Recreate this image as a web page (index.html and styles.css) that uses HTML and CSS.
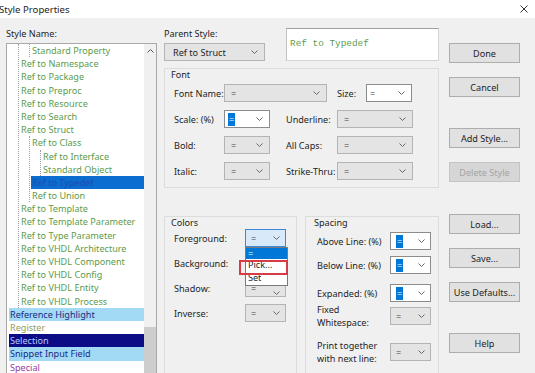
FILE: index.html
```html
<!DOCTYPE html>
<html lang="en">
<head>
  <meta charset="UTF-8">
  <title>Style Properties</title>
  <link rel="stylesheet" href="styles.css">
</head>
<body>
  <div class="titlebar">
    <span class="title">Style Properties</span>
    <svg class="close" width="8" height="8" viewBox="0 0 8 8"><path d="M0.5 0.5 L7.5 7.5 M7.5 0.5 L0.5 7.5" stroke="#333" stroke-width="1"/></svg>
  </div>

  <div class="dialog">
    <!-- left: style list -->
    <div class="col-left">
      <div class="label">Style Name:</div>
      <div class="listbox">
        <div class="tree">
          <ul class="branch">
            <li>
              <ul class="branch">
                <li><div class="item ref">Standard Property</div></li>
              </ul>
            </li>
            <li><div class="item ref">Ref to Namespace</div></li>
            <li><div class="item ref">Ref to Package</div></li>
            <li><div class="item ref">Ref to Preproc</div></li>
            <li><div class="item ref">Ref to Resource</div></li>
            <li><div class="item ref">Ref to Search</div></li>
            <li>
              <div class="item ref">Ref to Struct</div>
              <ul class="branch">
                <li>
                  <div class="item ref">Ref to Class</div>
                  <ul class="branch">
                    <li><div class="item ref">Ref to Interface</div></li>
                    <li><div class="item ref">Standard Object</div></li>
                  </ul>
                </li>
                <li><div class="item selected">Ref to Typedef</div></li>
                <li><div class="item ref">Ref to Union</div></li>
              </ul>
            </li>
            <li><div class="item ref">Ref to Template</div></li>
            <li><div class="item ref">Ref to Template Parameter</div></li>
            <li><div class="item ref">Ref to Type Parameter</div></li>
            <li><div class="item ref">Ref to VHDL Architecture</div></li>
            <li><div class="item ref">Ref to VHDL Component</div></li>
            <li><div class="item ref">Ref to VHDL Config</div></li>
            <li><div class="item ref">Ref to VHDL Entity</div></li>
            <li><div class="item ref">Ref to VHDL Process</div></li>
          </ul>
          <div class="item hl-ref">Reference Highlight</div>
          <div class="item register">Register</div>
          <div class="item selection">Selection</div>
          <div class="item snippet">Snippet Input Field</div>
          <div class="item special">Special</div>
        </div>
        <div class="vscroll">
          <div class="arrow"><svg width="7" height="4" viewBox="0 0 7 4"><path d="M0.5 3.5 L3.5 0.5 L6.5 3.5" fill="none" stroke="#555"/></svg></div>
          <div class="track"></div>
          <div class="thumb"></div>
          <div class="arrow"></div>
        </div>
      </div>
    </div>

    <!-- middle: properties -->
    <div class="col-mid">
      <div class="top-row">
        <div class="parent">
          <div class="label">Parent Style:</div>
          <div class="dd w-parent"><span>Ref to Struct</span><svg class="chev" width="7" height="4" viewBox="0 0 7 4"><path d="M0.5 0.5 L3.5 3.5 L6.5 0.5" fill="none" stroke="#666"/></svg></div>
        </div>
        <div class="preview">Ref to Typedef</div>
      </div>

      <div class="group font-group">
        <div class="group-title">Font</div>
        <div class="frow">
          <span class="flabel">Font Name:</span>
          <div class="dd w-fontname"><span>=</span><svg class="chev" width="7" height="4" viewBox="0 0 7 4"><path d="M0.5 0.5 L3.5 3.5 L6.5 0.5" fill="none" stroke="#666"/></svg></div>
          <span class="flabel size-label">Size:</span>
          <div class="dd combo w-size"><span>=</span><svg class="chev" width="7" height="4" viewBox="0 0 7 4"><path d="M0.5 0.5 L3.5 3.5 L6.5 0.5" fill="none" stroke="#666"/></svg></div>
        </div>
        <div class="frow">
          <span class="flabel">Scale: (%)</span>
          <div class="dd combo w-small"><span class="sel">=</span><svg class="chev" width="7" height="4" viewBox="0 0 7 4"><path d="M0.5 0.5 L3.5 3.5 L6.5 0.5" fill="none" stroke="#666"/></svg></div>
          <span class="flabel second">Underline:</span>
          <div class="dd w-wide"><span>=</span><svg class="chev" width="7" height="4" viewBox="0 0 7 4"><path d="M0.5 0.5 L3.5 3.5 L6.5 0.5" fill="none" stroke="#666"/></svg></div>
        </div>
        <div class="frow">
          <span class="flabel">Bold:</span>
          <div class="dd w-small"><span>=</span><svg class="chev" width="7" height="4" viewBox="0 0 7 4"><path d="M0.5 0.5 L3.5 3.5 L6.5 0.5" fill="none" stroke="#666"/></svg></div>
          <span class="flabel second">All Caps:</span>
          <div class="dd w-wide"><span>=</span><svg class="chev" width="7" height="4" viewBox="0 0 7 4"><path d="M0.5 0.5 L3.5 3.5 L6.5 0.5" fill="none" stroke="#666"/></svg></div>
        </div>
        <div class="frow">
          <span class="flabel">Italic:</span>
          <div class="dd w-small"><span>=</span><svg class="chev" width="7" height="4" viewBox="0 0 7 4"><path d="M0.5 0.5 L3.5 3.5 L6.5 0.5" fill="none" stroke="#666"/></svg></div>
          <span class="flabel second">Strike-Thru:</span>
          <div class="dd w-wide"><span>=</span><svg class="chev" width="7" height="4" viewBox="0 0 7 4"><path d="M0.5 0.5 L3.5 3.5 L6.5 0.5" fill="none" stroke="#666"/></svg></div>
        </div>
      </div>

      <div class="bottom-groups">
        <div class="group colors-group">
          <div class="group-title">Colors</div>
          <div class="crow">
            <span class="clabel">Foreground:</span>
            <div class="dd focus w-color">
              <span>=</span><svg class="chev" width="7" height="4" viewBox="0 0 7 4"><path d="M0.5 0.5 L3.5 3.5 L6.5 0.5" fill="none" stroke="#666"/></svg>
              <div class="popup">
                <div class="opt active">=</div>
                <div class="opt">Pick...</div>
                <div class="opt">Set</div>
                <div class="mark"></div>
              </div>
            </div>
          </div>
          <div class="crow">
            <span class="clabel">Background:</span>
            <div class="dd w-color"></div>
          </div>
          <div class="crow">
            <span class="clabel">Shadow:</span>
            <div class="dd w-color shadow-dd"><span>=</span><svg class="chev" width="7" height="4" viewBox="0 0 7 4"><path d="M0.5 0.5 L3.5 3.5 L6.5 0.5" fill="none" stroke="#666"/></svg></div>
          </div>
          <div class="crow">
            <span class="clabel">Inverse:</span>
            <div class="dd w-color"><span>=</span><svg class="chev" width="7" height="4" viewBox="0 0 7 4"><path d="M0.5 0.5 L3.5 3.5 L6.5 0.5" fill="none" stroke="#666"/></svg></div>
          </div>
        </div>

        <div class="group spacing-group">
          <div class="group-title">Spacing</div>
          <div class="srow">
            <span class="slabel">Above Line: (%)</span>
            <div class="dd combo w-color"><span class="sel">=</span><svg class="chev" width="7" height="4" viewBox="0 0 7 4"><path d="M0.5 0.5 L3.5 3.5 L6.5 0.5" fill="none" stroke="#666"/></svg></div>
          </div>
          <div class="srow below">
            <span class="slabel">Below Line: (%)</span>
            <div class="dd combo w-color"><span class="sel">=</span><svg class="chev" width="7" height="4" viewBox="0 0 7 4"><path d="M0.5 0.5 L3.5 3.5 L6.5 0.5" fill="none" stroke="#666"/></svg></div>
          </div>
          <div class="srow expanded">
            <span class="slabel">Expanded: (%)</span>
            <div class="dd combo w-color"><span class="sel">=</span><svg class="chev" width="7" height="4" viewBox="0 0 7 4"><path d="M0.5 0.5 L3.5 3.5 L6.5 0.5" fill="none" stroke="#666"/></svg></div>
          </div>
          <div class="srow fixed">
            <span class="slabel">Fixed<br>Whitespace:</span>
            <div class="dd w-color"><span>=</span><svg class="chev" width="7" height="4" viewBox="0 0 7 4"><path d="M0.5 0.5 L3.5 3.5 L6.5 0.5" fill="none" stroke="#666"/></svg></div>
          </div>
          <div class="srow print">
            <span class="slabel">Print together<br>with next line:</span>
            <div class="dd w-color"><span>=</span><svg class="chev" width="7" height="4" viewBox="0 0 7 4"><path d="M0.5 0.5 L3.5 3.5 L6.5 0.5" fill="none" stroke="#666"/></svg></div>
          </div>
        </div>
      </div>
    </div>

    <!-- right: buttons -->
    <div class="col-right">
      <div class="btn-group">
        <button>Done</button>
        <button>Cancel</button>
      </div>
      <div class="btn-group">
        <button>Add Style...</button>
        <button disabled>Delete Style</button>
      </div>
      <div class="btn-group third">
        <button>Load...</button>
        <button>Save...</button>
        <button>Use Defaults...</button>
      </div>
      <div class="btn-group">
        <button>Help</button>
      </div>
    </div>
  </div>
</body>
</html>
```

FILE: styles.css
```css
body {
  margin: 0;
  background: #f0f0f0;
  font-family: "Noto Sans", "Open Sans", sans-serif;
  font-size: 9.1px;
  color: #1e1e1e;
  overflow: hidden;
  height: 373px;
}
.titlebar {
  height: 18px;
  background: #fff;
  display: flex;
  align-items: center;
  justify-content: space-between;
  padding: 0 7px 0 0;
}
.title {
  margin-left: -1px;
  font-size: 9.6px;
}
.close {
  margin-top: -1px;
}
.dialog {
  display: flex;
  padding-top: 9px;
}
.label {
  line-height: 13px;
  height: 13px;
}

/* style list */
.col-left {
  width: 151px;
  margin-left: 6px;
}
.col-left .label {
  margin-bottom: 3px;
}
.listbox {
  height: 345px;
  border: 1px solid #a8a8a8;
  background: #fff;
  display: flex;
}
.tree {
  flex: 1;
  padding-left: 1px;
  overflow: hidden;
}
.branch {
  list-style: none;
  margin: 0 0 0 10px;
  padding: 0;
  border-left: 1px dotted #a0a0a0;
}
.item {
  height: 13.2px;
  line-height: 13.2px;
  margin-left: 1px;
  padding-left: 1px;
  white-space: nowrap;
}
.ref { color: #5c9c4c; }
.selected { background: #0b6dcf; color: #1d4cae; }
.hl-ref { background: #a2daf5; color: #1a2a86; }
.register { color: #9a9a62; }
.selection { background: #0c0c86; color: #b8c8ff; }
.snippet { background: #a2daf5; color: #1a2a86; }
.special { color: #9440a4; }
.vscroll {
  width: 12px;
  background: #f0f0f0;
  display: flex;
  flex-direction: column;
}
.vscroll .arrow {
  height: 14px;
  display: flex;
  align-items: center;
  justify-content: center;
}
.vscroll .track { flex: 1; }
.vscroll .thumb {
  height: 48px;
  background: #cdcdcd;
}

/* middle column */
.col-mid {
  width: 275px;
  margin-left: 7px;
}
.top-row {
  display: flex;
  align-items: flex-end;
  justify-content: space-between;
}
.parent .label {
  margin-bottom: 3px;
}
.preview {
  width: 153px;
  height: 33px;
  margin-top: -1px;
  background: #fff;
  border: 1px solid #d4d4d4;
  border-top-color: #a0a0a0;
  border-left-color: #c4c4c4;
  box-sizing: border-box;
  font-family: "Liberation Mono", monospace;
  font-size: 9.4px;
  color: #5c9c4c;
  padding: 9px 0 0 3px;
}
.dd {
  position: relative;
  flex: none;
  height: 18px;
  box-sizing: border-box;
  background: #e4e4e4;
  border: 1px solid #b4b4b4;
  display: flex;
  align-items: center;
  justify-content: space-between;
  padding: 0 6px 0 6px;
  color: #444;
}
.dd .chev { flex: none; }
.combo {
  background: #fff;
  border-color: #8c8c8c;
  padding-left: 3px;
}
.sel {
  background: #0078d7;
  color: #fff;
  line-height: 13px;
  padding: 0 1px;
}
.focus {
  background: #d8eaf9;
  border-color: #3c8ad6;
}
.shadow-dd {
  align-items: flex-end;
  padding-bottom: 1px;
}
.w-parent { width: 101px; color: #1e1e1e; padding-left: 8px; }
.w-fontname { width: 103px; }
.w-size { width: 46px; }
.w-small { width: 46px; }
.w-wide { width: 76px; }
.w-color { width: 41px; padding-left: 5px; padding-right: 5px; }

.group {
  border: 1px solid #dcdcdc;
  box-sizing: border-box;
}
.group-title {
  line-height: 11px;
  padding-left: 5px;
}
.font-group {
  margin-top: 7px;
  height: 120px;
  padding: 0 0 0 9px;
}
.font-group .group-title {
  margin-left: -8px;
  margin-bottom: 3px;
  line-height: 12px;
}
.frow {
  display: flex;
  align-items: center;
  margin-bottom: 8px;
}
.flabel {
  flex: none;
  width: 50px;
  white-space: nowrap;
}
.size-label {
  width: 29px;
  margin-left: 10px;
}
.flabel.second {
  width: 51px;
  margin-left: 16px;
}

.bottom-groups {
  display: flex;
  justify-content: space-between;
  margin-top: 28px;
}
.colors-group {
  width: 133px;
  height: 170px;
  padding-left: 9px;
}
.colors-group .group-title {
  margin-left: -8px;
  line-height: 12px;
  margin-bottom: 0;
}
.crow {
  display: flex;
  align-items: center;
  margin-bottom: 7px;
}
.clabel {
  flex: none;
  width: 71px;
}
.spacing-group {
  width: 134px;
  height: 170px;
  padding-left: 11px;
}
.spacing-group .group-title {
  margin-left: -8px;
  margin-bottom: 4px;
}
.srow {
  display: flex;
  align-items: center;
  line-height: 13px;
}
.srow.below { margin-top: 6px; }
.srow.expanded { margin-top: 10px; }
.srow.fixed { margin-top: 1px; }
.srow.print { margin-top: 10px; }
.slabel {
  flex: none;
  width: 73px;
}

/* opened dropdown list */
.popup {
  position: absolute;
  left: -1px;
  top: 17px;
  width: 41px;
  background: #fff;
  border: 1px solid #7a7a7a;
  z-index: 5;
  padding-bottom: 1px;
}
.opt {
  height: 12.5px;
  line-height: 12.5px;
  padding-left: 2px;
  color: #1e1e1e;
}
.opt.active {
  background: #0078d7;
  color: #fff;
  height: 11px;
  line-height: 11px;
}
.mark {
  position: absolute;
  left: -7px;
  top: 12px;
  width: 49px;
  height: 15px;
  box-sizing: border-box;
  border: 2px solid #d63c44;
}

/* buttons */
.col-right {
  width: 71px;
  margin-left: 10px;
  margin-top: 16px;
  display: flex;
  flex-direction: column;
  gap: 31px;
}
.btn-group {
  display: flex;
  flex-direction: column;
  gap: 14px;
}
.btn-group.third {
  margin-top: 1px;
}
button {
  height: 20px;
  width: 71px;
  font-family: inherit;
  font-size: 9.1px;
  color: #1e1e1e;
  background: #e1e1e1;
  border: 1px solid #adadad;
  padding: 0;
}
button:disabled {
  background: #d6d6d6;
  border-color: #c4c4c4;
  color: #a4a4a4;
}
```
